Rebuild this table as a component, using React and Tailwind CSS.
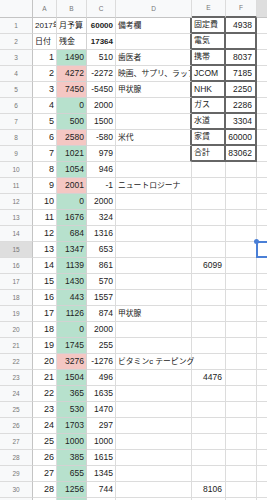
import React from "react";

const G = "g";
const R = "r";

// [A, B, color, C, D, E, F]
const rows = [
  ["2017年", "月予算", null, "60000", "備考欄", "固定費", "4938"],
  ["日付", "残金", null, "17364", "", "電気", ""],
  [1, 1490, G, 510, "歯医者", "携帯", "8037"],
  [2, 4272, R, -2272, "映画、サプリ、ラップ", "JCOM", "7185"],
  [3, 7450, R, -5450, "甲状腺", "NHK", "2250"],
  [4, 0, G, 2000, "", "ガス", "2286"],
  [5, 500, G, 1500, "", "水道", "3304"],
  [6, 2580, R, -580, "米代", "家賃", "60000"],
  [7, 1021, G, 979, "", "合計", "83062"],
  [8, 1054, G, 946, "", "", ""],
  [9, 2001, R, -1, "ニュートロジーナ", "", ""],
  [10, 0, G, 2000, "", "", ""],
  [11, 1676, G, 324, "", "", ""],
  [12, 684, G, 1316, "", "", ""],
  [13, 1347, G, 653, "", "", ""],
  [14, 1139, G, 861, "", "6099", ""],
  [15, 1430, G, 570, "", "", ""],
  [16, 443, G, 1557, "", "", ""],
  [17, 1126, G, 874, "甲状腺", "", ""],
  [18, 0, G, 2000, "", "", ""],
  [19, 1745, G, 255, "", "", ""],
  [20, 3276, R, -1276, "ビタミンc テーピング", "", ""],
  [21, 1504, G, 496, "", "4476", ""],
  [22, 365, G, 1635, "", "", ""],
  [23, 530, G, 1470, "", "", ""],
  [24, 1703, G, 297, "", "", ""],
  [25, 1000, G, 1000, "", "", ""],
  [26, 385, G, 1615, "", "", ""],
  [27, 655, G, 1345, "", "", ""],
  [28, 1256, G, 744, "", "8106", ""],
  ["", "", G, "", "", "", ""],
];

const font = {
  fontFamily: '"Liberation Sans", Arial, "Noto Sans CJK JP", sans-serif',
};

const base = "flex items-center whitespace-nowrap leading-none text-[#222]";

function Cell({ children, className = "" }) {
  return <div className={`${base} ${className}`}>{children}</div>;
}

export default function App() {
  return (
    <div className="w-[267px] h-[500px] overflow-hidden bg-white" style={font}>
      <div className="grid grid-cols-[33px_24px_30px_29px_76px_34px_31px_1fr] grid-rows-[18px_repeat(31,16px)]">
        {/* header row */}
        <div className="bg-[#f8f9fa] border-r border-b border-[#c4c4c4]" />
        {["A", "B", "C", "D"].map((l) => (
          <div
            key={l}
            className="flex items-center justify-center bg-[#f8f9fa] border-r border-r-[#dcdcdc] border-b border-b-[#c4c4c4] text-[6.5px] text-[#777]"
          >
            {l}
          </div>
        ))}
        {["E", "F"].map((l) => (
          <div
            key={l}
            className="flex items-center justify-center bg-[#f8f9fa] border-r border-r-[#dcdcdc] border-b-2 border-b-[#666] text-[6.5px] text-[#777]"
          >
            {l}
          </div>
        ))}
        <div className="bg-[#dedede] border-b border-[#c4c4c4]" />

        {rows.map((r, i) => {
          const n = i + 1;
          const [a, b, col, c, d, e, f] = r;
          const boxed = n <= 9;
          const sel = n === 15;
          const bBg =
            col === G ? "bg-[#b7e1cd]" : col === R ? "bg-[#f4c7c3]" : "bg-white";
          const isNumA = typeof a === "number";
          const isNumB = typeof b === "number";
          const isNumE = /^\d+$/.test(e);
          const isLatinE = /^[A-Z0-9]+$/.test(e);
          return (
            <React.Fragment key={n}>
              <div
                className={`flex items-center justify-center border-r border-r-[#c4c4c4] border-b border-b-[#dcdcdc] text-[6.5px] text-[#777] ${
                  sel ? "bg-[#dedede]" : "bg-[#f8f9fa]"
                }`}
              >
                {n}
              </div>
              <Cell
                className={`overflow-hidden border-r border-b border-[#dcdcdc] ${
                  isNumA ? "justify-end pr-[2px] text-[9px]" : "pl-[2px] text-[8px]"
                }`}
              >
                {a}
              </Cell>
              <Cell
                className={`overflow-hidden border-r border-b border-[#d2d2d2] ${bBg} ${
                  isNumB ? "justify-end pr-[2px] text-[8.5px]" : "pl-[2px] text-[8px]"
                }`}
              >
                {b}
              </Cell>
              <Cell
                className={`overflow-hidden border-r border-b border-[#dcdcdc] justify-end pr-[2px] ${
                  n <= 2 ? "font-bold text-[8px]" : "text-[8.5px]"
                }`}
              >
                {c}
              </Cell>
              <Cell
                className={`pl-[2px] text-[7.8px] border-b border-b-[#dcdcdc] ${
                  e ? "overflow-hidden" : "overflow-visible"
                } ${
                  boxed ? "border-r-2 border-r-[#666]" : "border-r border-r-[#dcdcdc]"
                }`}
              >
                {d}
              </Cell>
              <Cell
                className={`overflow-hidden ${
                  boxed
                    ? "border-r-2 border-b-2 border-[#666]"
                    : "border-r border-b border-[#dcdcdc]"
                } ${isNumE && !boxed ? "justify-end pr-[3px]" : "pl-[2px]"} ${
                  isLatinE ? "text-[8.5px]" : "text-[8px]"
                }`}
              >
                {e}
              </Cell>
              <Cell
                className={`overflow-hidden justify-end pr-[3px] text-[8.5px] ${
                  boxed
                    ? "border-r-2 border-b-2 border-[#666]"
                    : "border-r border-b border-[#dcdcdc]"
                }`}
              >
                {f}
              </Cell>
              <div className="relative border-b border-[#dcdcdc]">
                {sel && (
                  <>
                    <div className="absolute -top-px left-[-1px] w-[14px] h-[17px] border-2 border-[#4a7fd6]" />
                    <div className="absolute -top-[3px] -left-[3px] w-[5px] h-[5px] rounded-full bg-[#4a7fd6]" />
                  </>
                )}
              </div>
            </React.Fragment>
          );
        })}
      </div>
    </div>
  );
}
